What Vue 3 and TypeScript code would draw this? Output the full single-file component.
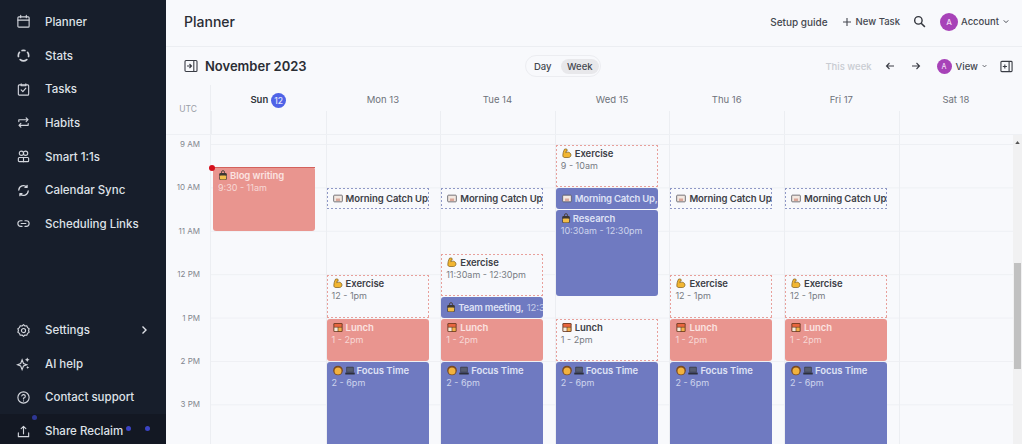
<template>
  <div class="app">
    <svg class="defs" width="0" height="0">
      <symbol id="em-arm" viewBox="0 0 12 12">
        <path d="M3 .8c1.500-.6 3-.2 3.400.9.200.8-.5 1.300-1.300 1.200l-.5 2.300c1-1 3-1.100 4.300-.3 1.500.8 2.200 2.400 1.700 3.900-.4 1.300-1.600 2-3.100 2H3.400C2 10.800 1 10 1 8.700 1 6 1.700 3.300 3 .8z" fill="#f2b632" stroke="#6f5212" stroke-width=".8" />
      </symbol>
      <symbol id="em-pack" viewBox="0 0 12 12">
        <path d="M4.200 3V2a1.800 1.800 0 0 1 3.600 0v1" fill="none" stroke="#4a4038" stroke-width="1.100" />
        <rect x="1.500" y="3" width="9" height="8.500" rx="1.500" fill="#3d3733" />
        <rect x="2.300" y="6" width="7.400" height="4.900" rx="1" fill="#f2bd4a" />
      </symbol>
      <symbol id="em-mail" viewBox="0 0 12 12">
        <rect x=".8" y="2" width="10.400" height="8" rx="1" fill="#f3e9e2" stroke="#5c5a60" stroke-width="1" />
        <rect x="3.500" y="6" width="5" height="3" fill="#d9a79a" />
      </symbol>
      <symbol id="em-bento" viewBox="0 0 12 12">
        <rect x=".5" y=".5" width="11" height="11" rx="1.500" fill="#6b3a22" />
        <rect x="1.600" y="1.600" width="8.800" height="3.600" fill="#e8663e" />
        <rect x="1.600" y="6" width="4" height="4.400" fill="#f6ead8" />
        <rect x="6.400" y="6" width="4" height="4.400" fill="#f2b04a" />
      </symbol>
      <symbol id="em-face" viewBox="0 0 12 12">
        <circle cx="6" cy="6" r="5.800" fill="#7a4a22" />
        <circle cx="6" cy="6.600" r="4.200" fill="#f2b23e" />
      </symbol>
      <symbol id="em-laptop" viewBox="0 0 12 12">
        <rect x="1.500" y="1.500" width="9" height="7" rx=".8" fill="#3b3f4c" />
        <rect x="2.500" y="2.500" width="7" height="5" fill="#565c70" />
        <rect x=".3" y="8.500" width="11.400" height="2.200" rx=".6" fill="#2c2f3a" />
      </symbol>
    </svg>

    <aside class="sidebar">
      <nav class="nav">
        <a v-for="item in navTop" :key="item.label" class="nav-item">
          <svg class="nav-icon" viewBox="0 0 16 16" v-html="item.icon"></svg>
          <span>{{ item.label }}</span>
        </a>
      </nav>
      <nav class="nav nav-bottom">
        <a v-for="item in navBottom" :key="item.label" class="nav-item">
          <svg class="nav-icon" viewBox="0 0 16 16" v-html="item.icon"></svg>
          <span>{{ item.label }}</span>
          <svg v-if="item.arrow" class="nav-arrow" viewBox="0 0 8 10">
            <path d="M2.500 1.500 6 5 2.500 8.500" fill="none" stroke="currentColor" stroke-width="1.400" />
          </svg>
        </a>
      </nav>
      <i class="dot dot-a"></i>
      <i class="dot dot-b"></i>
      <i class="dot dot-c"></i>
    </aside>

    <main class="main">
      <header class="topbar">
        <h1 class="page-title">Planner</h1>
        <div class="top-actions">
          <span class="top-link">Setup guide</span>
          <span class="top-link new-task">
            <svg class="plus" viewBox="0 0 10 10"><path d="M5 1v8M1 5h8" stroke="currentColor" stroke-width="1.100" /></svg>
            New Task
          </span>
          <svg class="search" viewBox="0 0 14 14">
            <circle cx="5.800" cy="5.800" r="4" fill="none" stroke="currentColor" stroke-width="1.500" />
            <path d="M8.800 8.800 12.800 12.800" stroke="currentColor" stroke-width="1.600" />
          </svg>
          <span class="account">
            <span class="avatar">A</span>
            <span class="top-link">Account</span>
            <svg class="chev" viewBox="0 0 8 6"><path d="M1 1.500 4 4.500 7 1.500" fill="none" stroke="currentColor" stroke-width="1.300" /></svg>
          </span>
        </div>
      </header>

      <section class="toolbar">
        <div class="month">
          <svg class="panel-icon" viewBox="0 0 14 14">
            <rect x="1" y="1.500" width="12" height="11" rx="1" fill="none" stroke="currentColor" stroke-width="1.100" />
            <path d="M9.800 1.500v11M3 7h4M5.500 5 7.500 7 5.500 9" fill="none" stroke="currentColor" stroke-width="1.100" />
          </svg>
          <h2 class="month-title">November 2023</h2>
        </div>
        <div class="toggle">
          <span class="toggle-opt">Day</span>
          <span class="toggle-opt active">Week</span>
        </div>
        <div class="view-tools">
          <span class="this-week">This week</span>
          <svg class="nav-btn" viewBox="0 0 10 10"><path d="M9 5H1.500M4.500 2 1.500 5 4.500 8" fill="none" stroke="currentColor" stroke-width="1.100" /></svg>
          <svg class="nav-btn" viewBox="0 0 10 10"><path d="M1 5h7.500M5.500 2 8.500 5 5.500 8" fill="none" stroke="currentColor" stroke-width="1.100" /></svg>
          <span class="view">
            <span class="avatar small">A</span>
            <span class="view-label">View</span>
            <svg class="chev tiny" viewBox="0 0 8 6"><path d="M1 1.500 4 4.500 7 1.500" fill="none" stroke="currentColor" stroke-width="1.300" /></svg>
          </span>
          <svg class="panel-icon right" viewBox="0 0 14 14">
            <rect x="1" y="1.500" width="12" height="11" rx="1" fill="none" stroke="currentColor" stroke-width="1.200" />
            <path d="M9.800 1.500v11M3 7h4.500M5.200 4.800v4.400" fill="none" stroke="currentColor" stroke-width="1.200" />
          </svg>
        </div>
      </section>

      <section class="day-head">
        <div class="utc">UTC</div>
        <div v-for="d in days" :key="d.name" class="day-label" :class="{ today: d.today }">
          <span>{{ d.name }}</span>
          <span v-if="d.today" class="today-num">{{ d.num }}</span>
          <span v-else>&nbsp;{{ d.num }}</span>
        </div>
      </section>

      <section class="calendar">
        <div class="hours">
          <span v-for="h in hours" :key="h.label" class="hour" :style="{ top: hourTop(h.at) + 'px' }">{{ h.label }}</span>
        </div>
        <div class="columns">
          <div v-for="d in days" :key="d.name" class="column">
            <div
              v-for="e in d.events"
              :key="e.title + e.start"
              class="event"
              :class="[e.color, e.dashed ? 'dashed' : 'solid', e.compact ? 'compact' : '']"
              :style="eventStyle(e)"
            >
              <div class="event-title">
                <svg v-for="icon in e.icons" :key="icon" class="emoji" :class="'emoji-' + icon">
                  <use :href="'#em-' + icon" />
                </svg>
                <strong>{{ e.title }}</strong>
                <span v-if="e.inlineTime" class="inline-time">{{ e.inlineTime }}</span>
              </div>
              <div v-if="e.time" class="event-time">{{ e.time }}</div>
            </div>
            <template v-if="d.today">
              <i class="now-line"></i>
              <i class="now-dot"></i>
            </template>
          </div>
        </div>
        <div class="scrollbar">
          <svg class="scroll-up" viewBox="0 0 6 4"><path d="M3 0 6 4H0z" fill="#555" /></svg>
          <div class="scroll-thumb"></div>
        </div>
      </section>
    </main>
  </div>
</template>

<script setup lang="ts">
interface CalEvent {
  title: string;
  time?: string;
  inlineTime?: string;
  start: number;
  end: number;
  color: 'red' | 'blue';
  dashed?: boolean;
  compact?: boolean;
  icons: string[];
}

interface Day {
  name: string;
  num: string;
  today?: boolean;
  events: CalEvent[];
}

const HOUR = 43.4;
const FIRST_LINE = 9;

const line = (d: string) =>
  `<g fill="none" stroke="currentColor" stroke-width="1.200" stroke-linecap="round" stroke-linejoin="round">${d}</g>`;

const navTop = [
  { label: 'Planner', icon: line('<rect x="2" y="3" width="12" height="11" rx="1"/><path d="M2 6.500h12M5 1.500v2.500M11 1.500v2.500"/>') },
  { label: 'Stats', icon: line('<path stroke-width="1.800" d="M6.500 2.700a5.500 5.500 0 0 1 3 0M12.300 4.600a5.500 5.500 0 0 1 1.100 4.500M11.500 12.300a5.500 5.500 0 0 1-7 0M2.600 9.100a5.500 5.500 0 0 1 1.100-4.500"/>') },
  { label: 'Tasks', icon: line('<rect x="2.500" y="3" width="11" height="11" rx="1"/><path d="M5.500 2v2h5V2M5.500 8.500 7.300 10.300 10.500 6.500"/>') },
  { label: 'Habits', icon: line('<path d="M3 7V5h9.500M10.800 3l2 2-2 2M13 9v2H3.500M5.200 9l-2 2 2 2"/>') },
  { label: 'Smart 1:1s', icon: line('<circle cx="5.800" cy="4.500" r="2.300"/><circle cx="10.200" cy="4.500" r="2.300"/><rect x="2.500" y="9" width="11" height="4.500" rx="1"/><path d="M8 9v4.500"/>') },
  { label: 'Calendar Sync', icon: line('<path stroke-width="1.400" d="M3 7.500a5 5 0 0 1 8.500-3.200M13 8.500a5 5 0 0 1-8.500 3.200M11.800 2.500v2.200H9.600M4.200 13.500v-2.200h2.200"/>') },
  { label: 'Scheduling Links', icon: line('<path d="M6.500 5H5a3 3 0 0 0 0 6h1.500M9.500 5H11a3 3 0 0 1 0 6H9.500M5.500 8h5"/>') },
];

const navBottom = [
  { label: 'Settings', arrow: true, icon: line('<circle cx="8" cy="8" r="2.200"/><path d="M8 1.800l1.500 1.400 2-.2.800 1.900 1.700 1.200-.6 1.900.6 1.900-1.700 1.200-.8 1.900-2-.2L8 14.200l-1.500-1.400-2 .2-.8-1.900L2 9.900 2.600 8 2 6.100l1.700-1.200.8-1.900 2 .2z"/>') },
  { label: 'AI help', icon: '<path fill="none" stroke="currentColor" stroke-width="1.200" d="M6.500 4 8 8 11.500 9.300 8 10.700 6.500 14.500 5 10.700 1.500 9.300 5 8z"/><path fill="currentColor" d="M12 1.500l.8 1.800 1.700.7-1.700.7-.8 1.800-.8-1.800L9.500 4l1.700-.7zM12.500 10.500l.5 1.200 1.200.5-1.200.5-.5 1.200-.5-1.200-1.200-.5 1.200-.5z"/>' },
  { label: 'Contact support', icon: line('<circle cx="8" cy="8" r="6"/><path d="M6.200 6.300A1.900 1.900 0 1 1 8 8.700v.8"/><path d="M8 11.500v.1"/>') },
  { label: 'Share Reclaim', icon: line('<path d="M2.500 9.500v4h11v-4M8 10.500V2.500M5.500 5 8 2.500 10.500 5"/>') },
];

const exercise = (start: number, time: string): CalEvent => ({
  title: 'Exercise', time, start, end: start + 1, color: 'red', dashed: true, icons: ['arm'],
});
const catchUp = (): CalEvent => ({
  title: 'Morning Catch Up', start: 10, end: 10.5, color: 'blue', dashed: true, compact: true, icons: ['mail'],
});
const lunch = (dashed = false): CalEvent => ({
  title: 'Lunch', time: '1 - 2pm', start: 13, end: 14, color: 'red', dashed, icons: ['bento'],
});
const focus = (): CalEvent => ({
  title: 'Focus Time', time: '2 - 6pm', start: 14, end: 18, color: 'blue', icons: ['face', 'laptop'],
});

const days: Day[] = [
  {
    name: 'Sun', num: '12', today: true,
    events: [{ title: 'Blog writing', time: '9:30 - 11am', start: 9.5, end: 11, color: 'red', icons: ['pack'] }],
  },
  { name: 'Mon', num: '13', events: [catchUp(), exercise(12, '12 - 1pm'), lunch(), focus()] },
  {
    name: 'Tue', num: '14',
    events: [
      catchUp(),
      exercise(11.5, '11:30am - 12:30pm'),
      { title: 'Team meeting,', inlineTime: '12:30pm', start: 12.5, end: 13, color: 'blue', compact: true, icons: ['pack'] },
      lunch(),
      focus(),
    ],
  },
  {
    name: 'Wed', num: '15',
    events: [
      exercise(9, '9 - 10am'),
      { title: 'Morning Catch Up,', start: 10, end: 10.5, color: 'blue', compact: true, icons: ['mail'] },
      { title: 'Research', time: '10:30am - 12:30pm', start: 10.5, end: 12.5, color: 'blue', icons: ['pack'] },
      lunch(true),
      focus(),
    ],
  },
  { name: 'Thu', num: '16', events: [catchUp(), exercise(12, '12 - 1pm'), lunch(), focus()] },
  { name: 'Fri', num: '17', events: [catchUp(), exercise(12, '12 - 1pm'), lunch(), focus()] },
  { name: 'Sat', num: '18', events: [] },
];

const hours = [
  { label: '9 AM', at: 9 },
  { label: '10 AM', at: 10 },
  { label: '11 AM', at: 11 },
  { label: '12 PM', at: 12 },
  { label: '1 PM', at: 13 },
  { label: '2 PM', at: 14 },
  { label: '3 PM', at: 15 },
];

function hourTop(at: number): number {
  return FIRST_LINE + (at - 9) * HOUR;
}

function eventStyle(e: CalEvent) {
  return {
    top: hourTop(e.start) + 1 + 'px',
    height: (e.end - e.start) * HOUR - 1 + 'px',
  };
}
</script>

<style scoped>
.app {
  display: flex;
  width: 100%;
  height: 444px;
  overflow: hidden;
  background: #f8f9fc;
  color: #33363d;
  font-family: Inter, "Liberation Sans", sans-serif;
}

.app * {
  box-sizing: border-box;
}

.defs {
  position: absolute;
}

.sidebar {
  position: relative;
  flex: 0 0 166px;
  display: flex;
  flex-direction: column;
  justify-content: space-between;
  padding-top: 5px;
  background: #171e2b;
  color: #dfe2e8;
}

.nav {
  display: flex;
  flex-direction: column;
}

.nav-bottom {
  margin-bottom: -4px;
}

.nav-item {
  display: flex;
  align-items: center;
  height: 33.7px;
  padding-left: 16px;
  font-size: 11.5px;
  font-weight: 500;
}

.nav-bottom .nav-item:last-child {
  background: #131823;
}

.nav-icon {
  width: 15px;
  height: 15px;
  margin-right: 14px;
  color: #d3d6dd;
}

.nav-arrow {
  width: 8px;
  height: 10px;
  margin-left: auto;
  margin-right: 18px;
}

.dot {
  position: absolute;
  width: 5px;
  height: 5px;
  border-radius: 50%;
  background: #3b44c4;
}

.dot-a { left: 32px; top: 415px; opacity: .7; }
.dot-b { left: 126px; top: 426px; }
.dot-c { left: 145px; top: 426px; }

.main {
  flex: 1;
  min-width: 0;
  display: flex;
  flex-direction: column;
}

.topbar {
  flex: 0 0 47px;
  display: flex;
  align-items: center;
  justify-content: space-between;
  padding: 0 13px 3px 18px;
  border-bottom: 1px solid #eceef2;
}

.page-title {
  margin: 0;
  font-size: 14px;
  font-weight: 500;
  color: #2a2d34;
}

.top-actions {
  display: flex;
  align-items: center;
}

.top-link {
  font-size: 10px;
  font-weight: 500;
  color: #44474f;
}

.new-task {
  display: flex;
  align-items: center;
  margin-left: 14px;
  font-size: 9.5px;
}

.plus {
  width: 10px;
  height: 10px;
  margin-right: 4px;
}

.search {
  width: 13px;
  height: 13px;
  margin-left: 13px;
  color: #33363d;
}

.account {
  display: flex;
  align-items: center;
  margin-left: 14px;
}

.account .top-link {
  font-size: 9.5px;
}

.avatar {
  display: flex;
  align-items: center;
  justify-content: center;
  width: 18px;
  height: 18px;
  margin-right: 3px;
  border-radius: 50%;
  background: #a742b8;
  color: #f1dcf4;
  font-size: 8px;
  font-weight: 500;
}

.avatar.small {
  width: 15px;
  height: 15px;
  margin-right: 4px;
  font-size: 7px;
}

.chev {
  width: 6px;
  height: 5px;
  margin-left: 4px;
  color: #44474f;
}

.chev.tiny {
  width: 5px;
  height: 4px;
  margin-left: 4px;
}

.toolbar {
  flex: 0 0 38px;
  display: grid;
  grid-template-columns: 341px 76px 1fr;
  align-items: center;
  padding: 0 9px 0 18px;
}

.month {
  display: flex;
  align-items: center;
}

.panel-icon {
  width: 14px;
  height: 14px;
  color: #3a3d45;
}

.month-title {
  margin: 0 0 0 7px;
  font-size: 13px;
  font-weight: 600;
  color: #2a2d34;
}

.toggle {
  display: flex;
  align-items: center;
  gap: 6px;
  height: 22px;
  padding: 0 1px 0 5px;
  border: 1px solid #ecedf1;
  border-radius: 11px;
}

.toggle-opt {
  padding: 2px 3px;
  font-size: 9.5px;
  font-weight: 500;
  color: #44474f;
}

.toggle-opt.active {
  flex: 1;
  border-radius: 9px;
  background: #e8e8eb;
  text-align: center;
}

.view-tools {
  display: flex;
  align-items: center;
  justify-content: flex-end;
}

.this-week {
  margin-right: 13px;
  font-size: 9.5px;
  font-weight: 500;
  color: #c9ccd2;
}

.nav-btn {
  width: 10px;
  height: 10px;
  margin-right: 16px;
  color: #3a3d45;
}

.view {
  display: flex;
  align-items: center;
  margin-right: 13px;
}

.view-label {
  font-size: 9.5px;
  font-weight: 500;
  color: #44474f;
}

.panel-icon.right {
  width: 13px;
  height: 13px;
}

.day-head {
  flex: 0 0 50px;
  display: grid;
  grid-template-columns: 45px repeat(7, 114.6px);
  padding-right: 9px;
  border-bottom: 1px solid #eef0f4;
}

.utc {
  padding: 19px 13px 0 0;
  border-right: 1px solid #eceef2;
  text-align: right;
  font-size: 8.5px;
  color: #9a9ea6;
}

.day-label {
  position: relative;
  display: flex;
  align-items: flex-start;
  justify-content: center;
  padding-top: 8px;
  font-size: 9.5px;
  font-weight: 400;
  line-height: 14px;
  color: #6e727a;
}

.day-label:not(:first-of-type)::before {
  content: "";
  position: absolute;
  left: 0;
  top: 26px;
  bottom: 0;
  border-left: 1px solid #eceef2;
}

.day-label.today {
  font-weight: 600;
  color: #33363d;
}

.today-num {
  display: flex;
  align-items: center;
  justify-content: center;
  width: 15px;
  height: 15px;
  margin-left: 3px;
  border-radius: 50%;
  background: #4f63e7;
  color: #e3e7fc;
  font-size: 8.5px;
  font-weight: 500;
}

.calendar {
  position: relative;
  flex: 1;
  min-height: 0;
  display: grid;
  grid-template-columns: 45px 1fr 9px;
  overflow: hidden;
}

.hours {
  position: relative;
  border-right: 1px solid #eceef2;
}

.hour {
  position: absolute;
  right: 10px;
  transform: translateY(-50%);
  font-size: 8px;
  color: #83878f;
  white-space: nowrap;
}

.columns {
  display: grid;
  grid-template-columns: repeat(7, 114.6px);
  background-image: linear-gradient(#eef0f4 1px, transparent 1px);
  background-position: 0 9px;
  background-size: 100% 43.4px;
}

.column {
  position: relative;
  border-left: 1px solid #eceef2;
}

.column:first-child {
  border-left: 0;
}

.event {
  position: absolute;
  left: 0;
  width: 102px;
  padding: 2px 5px;
  border-radius: 3px;
  overflow: hidden;
  white-space: nowrap;
  font-size: 9.5px;
}

.column:first-child .event {
  left: 2px;
}

.event.solid.red {
  background: #e9958f;
  color: #fbe3e1;
}

.event.solid.blue {
  background: #6f7ac1;
  color: #dfe2f5;
}

/* dash drawn by hand: a 1px css dashed border is too sparse here */
.event.dashed {
  --dash: #e8a09b;
  color: #3d4047;
  border-radius: 0;
  background:
    linear-gradient(90deg, var(--dash) 60%, transparent 0) top left / 4px 1px repeat-x,
    linear-gradient(90deg, var(--dash) 60%, transparent 0) bottom left / 4px 1px repeat-x,
    linear-gradient(var(--dash) 60%, transparent 0) top left / 1px 4px repeat-y,
    linear-gradient(var(--dash) 60%, transparent 0) top right / 1px 4px repeat-y,
    #f8f9fc;
}

.event.dashed.blue {
  --dash: #8f98c6;
}

.event.compact {
  display: flex;
  align-items: center;
  padding-top: 0;
  padding-bottom: 0;
}

.event-title {
  display: flex;
  align-items: center;
  gap: 3px;
  height: 13px;
}

.event-title strong {
  font-weight: 600;
  letter-spacing: -0.06px;
}

.event.compact.solid strong {
  letter-spacing: -0.2px;
}

.inline-time {
  font-weight: 400;
  opacity: .8;
}

.event-time {
  font-size: 9px;
  line-height: 12px;
  opacity: .85;
}

.event.dashed .event-time {
  color: #777b83;
  opacity: 1;
}

.emoji {
  flex: 0 0 auto;
  width: 10px;
  height: 11px;
  margin-left: 1px;
}

.emoji-pack {
  margin-left: 0;
  margin-right: -1px;
}

.emoji-laptop {
  margin-left: -1px;
  margin-right: -1px;
}

.now-line {
  position: absolute;
  left: 2px;
  width: 102px;
  top: 31.5px;
  border-top: 1.5px solid #d4615c;
}

.now-dot {
  position: absolute;
  left: -2px;
  top: 29.5px;
  width: 6px;
  height: 6px;
  border-radius: 50%;
  background: #d50f1c;
}

.scrollbar {
  display: flex;
  flex-direction: column;
  align-items: center;
  padding-top: 6px;
  background: #f1f1f2;
}

.scroll-up {
  width: 5px;
  height: 3px;
}

.scroll-thumb {
  flex: 0 0 106px;
  width: 7px;
  margin-top: 119px;
  background: #c1c1c1;
}
</style>

<style>
body {
  overflow: hidden;
}
</style>
